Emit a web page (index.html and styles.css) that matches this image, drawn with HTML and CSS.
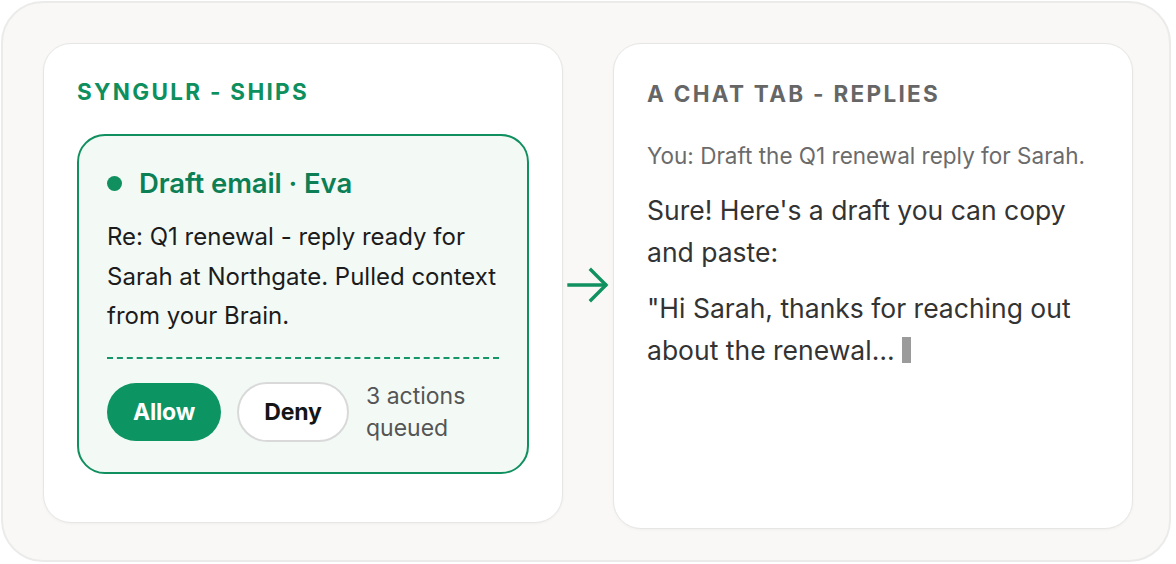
FILE: index.html
```html
<!DOCTYPE html>
<html lang="en">
<head>
<meta charset="UTF-8">
<meta name="viewport" content="width=device-width, initial-scale=1.0">
<title>Syngulr vs chat tab</title>
<link rel="stylesheet" href="styles.css">
</head>
<body>

<div class="frame">

  <div class="card card-left">
    <div class="label label-green">SYNGULR - SHIPS</div>

    <div class="action">
      <div class="action-title"><span class="dot"></span>Draft email · Eva</div>
      <p class="action-body">Re: Q1 renewal - reply ready for Sarah at Northgate. Pulled context from your Brain.</p>
      <div class="divider"></div>
      <div class="action-row">
        <button class="btn btn-allow">Allow</button>
        <button class="btn btn-deny">Deny</button>
        <span class="queued">3 actions<br>queued</span>
      </div>
    </div>
  </div>

  <div class="arrow">
    <svg width="42" height="36" viewBox="0 0 42 36" fill="none" stroke="#10915f" stroke-width="3.4" stroke-linecap="square">
      <path d="M2 18 H38"/>
      <path d="M24 3 L39 18 L24 33"/>
    </svg>
  </div>

  <div class="card card-right">
    <div class="label label-gray">A CHAT TAB - REPLIES</div>
    <p class="chat-you">You: Draft the Q1 renewal reply for Sarah.</p>
    <p class="chat-reply first">Sure! Here's a draft you can copy and paste:</p>
    <p class="chat-reply">"Hi Sarah, thanks for reaching out about the renewal… <span class="cursor"></span></p>
  </div>

</div>

</body>
</html>
```

FILE: styles.css
```css
body {
  margin: 0;
  font-family: Inter, "Noto Sans", sans-serif;
  background: #ffffff;
}
.frame {
  width: 1170px;
  height: 561px;
  margin: 1px 0 0 1px;
  box-sizing: border-box;
  border: 2px solid #ebebea;
  border-radius: 42px;
  background: #f9f8f6;
  padding: 40px 0 0 40px;
  display: flex;
  align-items: flex-start;
}
.card {
  width: 520px;
  box-sizing: border-box;
  background: #ffffff;
  border: 1px solid #e6e6e4;
  border-radius: 28px;
  box-shadow: 0 1px 3px rgba(0, 0, 0, 0.04);
  padding: 34px 33px 0 33px;
}
.card-left {
  height: 480px;
}
.card-right {
  height: 486px;
}
.label {
  font-size: 22.5px;
  font-weight: 700;
  letter-spacing: 2.3px;
  line-height: 28px;
  margin-bottom: 28px;
}
.label-green {
  color: #0e8f5e;
}
.label-gray {
  color: #666666;
  margin-top: 2px;
  margin-bottom: 33px;
}
.action {
  border: 2px solid #10905f;
  border-radius: 28px;
  background: #f3faf6;
  padding: 30px 8px 28px 28px;
}
.action-title {
  display: flex;
  align-items: center;
  font-size: 27.5px;
  font-weight: 600;
  color: #0d7f55;
  line-height: 34px;
  letter-spacing: -0.1px;
}
.dot {
  width: 15px;
  height: 15px;
  border-radius: 50%;
  background: #10905f;
  margin-right: 17px;
}
.action-body {
  margin: 17px 0 0 0;
  font-size: 24px;
  line-height: 39.5px;
  color: #1c1c1c;
}
.divider {
  margin: 21px 0 0 0;
  width: 392px;
  border-top: 2px dashed #14966a;
}
.action-row {
  display: flex;
  align-items: center;
  margin-top: 21px;
}
.btn {
  font-family: Inter, "Noto Sans", sans-serif;
  font-size: 23px;
  font-weight: 700;
  height: 58px;
  border-radius: 29px;
  cursor: pointer;
  letter-spacing: -0.2px;
}
.btn-allow {
  width: 114px;
  background: #0c9463;
  color: #ffffff;
  border: none;
}
.btn-deny {
  width: 112px;
  height: 60px;
  border-radius: 30px;
  margin-left: 16px;
  background: #ffffff;
  color: #151515;
  border: 2px solid #d9d9d9;
}
.queued {
  margin-left: 17px;
  font-size: 23px;
  line-height: 32px;
  color: #555555;
}
.arrow {
  width: 50px;
  display: flex;
  justify-content: center;
  padding-top: 224px;
}
.chat-you {
  margin: 0;
  font-size: 22.5px;
  line-height: 30px;
  color: #6b6b6b;
}
.chat-reply {
  margin: 14px 0 0 0;
  max-width: 440px;
  font-size: 26.5px;
  line-height: 42px;
  color: #333333;
}
.chat-reply.first {
  margin-top: 18px;
}
.cursor {
  display: inline-block;
  width: 9px;
  height: 26px;
  background: #9b9b9b;
  vertical-align: -3px;
}
```
